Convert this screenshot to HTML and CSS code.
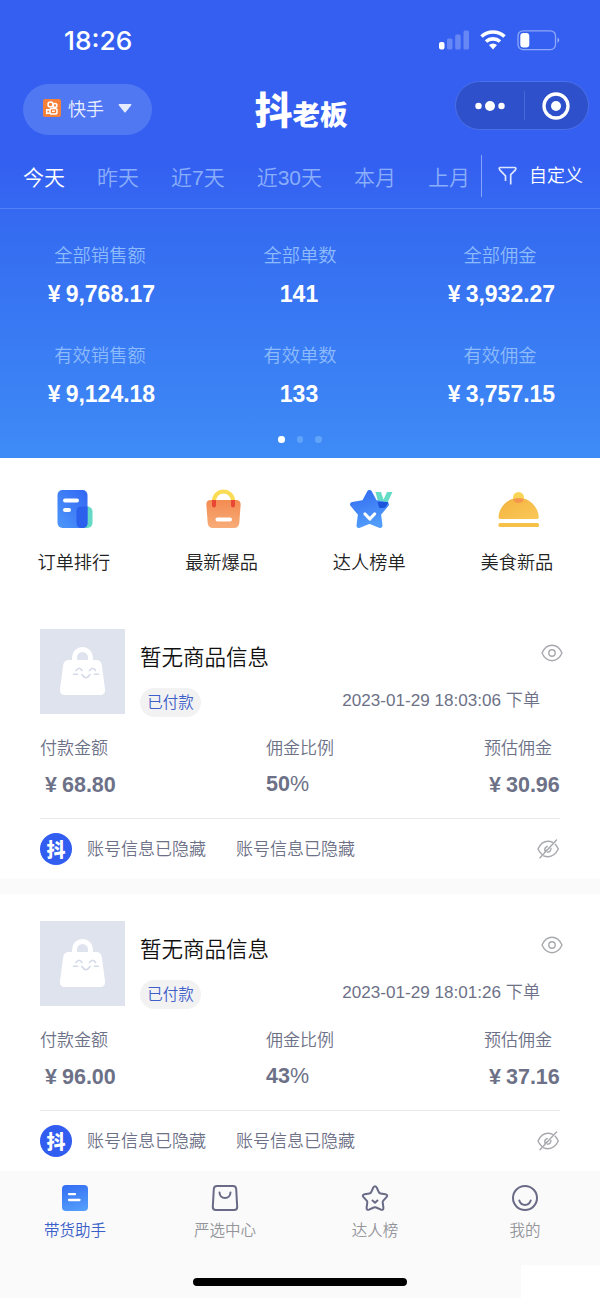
FILE: index.html
```html
<!DOCTYPE html>
<html lang="zh-CN">
<head>
<meta charset="utf-8">
<title>抖老板</title>
<link rel="stylesheet" href="styles.css">
</head>
<body>
<svg class="defs" width="0" height="0" aria-hidden="true">
  <defs>
    <linearGradient id="blue" x1="1" y1="0" x2="0" y2="1"><stop offset="0" stop-color="#3166f3"/><stop offset="1" stop-color="#4e98fb"/></linearGradient>
    <linearGradient id="blue-down" x1=".3" y1="0" x2=".6" y2="1"><stop offset="0" stop-color="#3570f3"/><stop offset="1" stop-color="#529dfb"/></linearGradient>
    <linearGradient id="orange" x1="0" y1="0" x2="0" y2="1"><stop offset="0" stop-color="#f38b52"/><stop offset="1" stop-color="#f8ac78"/></linearGradient>
    <linearGradient id="yellow" x1="0" y1="0" x2="1" y2="1"><stop offset="0" stop-color="#f3b23d"/><stop offset="1" stop-color="#fac95a"/></linearGradient>
    <symbol id="bag" viewBox="0 0 85 85">
      <path d="M34.500 34v-5.500a8 8 0 0 1 16 0V34" fill="none" stroke="#fff" stroke-width="5"/>
      <path d="M29 31h27q5 0 5.800 5l3.200 24q.5 6-5 6H25q-5.500 0-5-6l3.200-24q.8-5 5.800-5z" fill="#fff"/>
      <g fill="none" stroke="#d5dae8" stroke-width="1.600" stroke-linecap="round"><path d="M36 41.500q3.500-4.500 6 0M49.500 41.500q3.500-4.500 6 0M33.500 45.200h4M54.500 45.200h4M42 45.500q4 6.500 8 0"/></g>
    </symbol>
    <symbol id="eye" viewBox="0 0 24 20">
      <g fill="none" stroke="#a7a8ad" stroke-width="1.400"><path d="M2 10Q5.500 2.300 12 2.300T22 10Q18.500 17.700 12 17.700T2 10z"/><circle cx="12" cy="10" r="3.200"/></g>
    </symbol>
    <symbol id="eye-off" viewBox="0 0 24 20">
      <g fill="none" stroke="#a7a8ad" stroke-width="1.400" stroke-linecap="round"><path d="M5.500 15Q3.500 13.200 2 10Q5.500 2.300 12 2.300q2.500 0 4.500 1M19.200 5.300Q21 7.300 22.300 10Q18.500 17.700 12 17.700q-2.400 0-4.300-.8M9 12.200q-1-3.500 2.300-4.700M15 9.500q-.3 3.500-3.500 3.800M10 11.500l2.500-1.500M20.500 1L4 18.800"/></g>
    </symbol>
  </defs>
</svg>
<div class="phone">
  <header class="hero">
    <div class="status">
      <span class="clock">18:26</span>
      <svg class="status-icons" width="124" height="24" viewBox="0 0 124 24" fill="#fff">
        <rect x="1" y="14" width="5.500" height="7.500" rx="2"/>
        <g opacity=".25"><rect x="9" y="10.500" width="5.500" height="11" rx="1.500"/><rect x="17.200" y="6.500" width="5.500" height="15" rx="1.500"/><rect x="25.500" y="2.500" width="5.500" height="19" rx="1.500"/></g>
        <g fill="none" stroke="#fff" stroke-width="3.600"><path d="M43.500 8.500a17 17 0 0 1 23 0M48 13.500a10.500 10.500 0 0 1 14 0"/></g>
        <path d="M51 17a6 6 0 0 1 8 0l-4 4.500z"/>
        <rect x="80" y="2.800" width="37.500" height="18.800" rx="5" fill="none" stroke="#fff" stroke-opacity=".45" stroke-width="1.300"/>
        <rect x="82.300" y="5" width="9" height="14.400" rx="3"/>
        <path d="M119.500 9.500q3.500 2.500 0 5.500z" opacity=".5"/>
      </svg>
    </div>
    <div class="titlebar">
      <button class="platform">
        <svg width="18" height="18" viewBox="0 0 18 18"><rect width="18" height="18" rx="2" fill="#f4803a"/><g fill="none" stroke="#fff" stroke-width="1.500"><circle cx="7.500" cy="5.500" r="2.500"/><circle cx="12" cy="6.500" r="1.900"/><rect x="7" y="9.500" width="7" height="5.500" rx="1.800"/><path d="M7 11l-3.300-.2v3.700L7 14M9 12.300h2.800"/></g></svg>
        <span>快手</span>
        <svg class="caret" width="14" height="9" viewBox="0 0 14 9"><path d="M1.500 0h11q1.500 0 .7 1.300L7.800 8q-.8 1-1.600 0L.8 1.300Q0 0 1.500 0z" fill="#e4eaff"/></svg>
      </button>
      <h1 class="logo"><b>抖</b><span>老板</span></h1>
      <div class="capsule">
        <svg width="32" height="12" viewBox="0 0 32 12" fill="#fff"><circle cx="4.500" cy="6" r="3.200"/><circle cx="16" cy="6" r="5"/><circle cx="27.500" cy="6" r="3.200"/></svg>
        <i></i>
        <svg width="28" height="28" viewBox="0 0 28 28"><circle cx="14" cy="14" r="12" fill="none" stroke="#fff" stroke-width="3.300"/><circle cx="14" cy="14" r="5" fill="#fff"/></svg>
      </div>
    </div>
    <nav class="ranges">
      <span class="on">今天</span><span>昨天</span><span>近7天</span><span>近30天</span><span>本月</span><span>上月</span>
      <div class="custom"><svg width="20" height="20" viewBox="0 0 20 20"><path d="M7.500 15V9.800L2 4.200Q.2 1.500 2.500 1.500h14q2.300 0 .7 2.700l-4.500 4.500V18.500" fill="none" stroke="#dce5ff" stroke-width="1.700"/></svg>自定义</div>
    </nav>
    <section class="stats">
      <div><small>全部销售额</small><strong><em>¥</em>9,768.17</strong></div>
      <div><small>全部单数</small><strong>141</strong></div>
      <div><small>全部佣金</small><strong><em>¥</em>3,932.27</strong></div>
      <div><small>有效销售额</small><strong><em>¥</em>9,124.18</strong></div>
      <div><small>有效单数</small><strong>133</strong></div>
      <div><small>有效佣金</small><strong><em>¥</em>3,757.15</strong></div>
    </section>
    <div class="dots"><i class="on"></i><i></i><i></i></div>
  </header>

  <nav class="shortcuts">
    <a><svg width="44" height="44" viewBox="-2.500 0 44 44"><rect x="22" y="18.500" width="16" height="21.500" rx="5" fill="#65d9c5"/><rect x="3" y="2" width="30" height="38" rx="5" fill="url(#blue)"/><path d="M27 18.500h6V35q0 5-5 5h-1q-5 0-5-5V23.500q0-5 5-5z" fill="#2b60ed"/><path d="M10.500 12.500h12M10.500 22h4" stroke="#fff" stroke-width="4" stroke-linecap="round"/></svg>订单排行</a>
    <a><svg width="44" height="44" viewBox="-1 0 44 44"><path d="M13 18v-5a9.500 9.500 0 0 1 19 0v5" fill="none" stroke="#fadc55" stroke-width="4"/><path d="M10 12h25q5 0 4.600 5l-1.300 18q-.5 5-5.300 5H12q-4.800 0-5.300-5L5.400 17Q5 12 10 12z" fill="url(#orange)"/><path d="M11 12h4v5.500a2 2 0 0 1-4 0zM30 12h4v5.500a2 2 0 0 1-4 0z" fill="#e94733"/><path d="M16.500 31.500h12.500" stroke="#fff" stroke-width="4" stroke-linecap="round"/></svg>最新爆品</a>
    <a><svg width="48" height="44" viewBox="-2.500 0 48 44"><path d="M28 4h5.500l2.500 7.500L39.500 4H45l-7 15h-6z" fill="#66dcc6"/><path d="M22 4.500l5.400 10 11.500 2-7.900 9.300 1.500 11.700L22 33.300 11.500 37.500l1.500-11.700-7.900-9.300 11.500-2z" fill="url(#blue-down)" stroke="url(#blue-down)" stroke-width="5" stroke-linejoin="round"/><path d="M30 14h10.800l-2 4q-1 2-3 2h-4z" fill="#1d54dc"/><path d="M17.500 26l4.800 5 4.800-5" fill="none" stroke="#fff" stroke-width="3.200" stroke-linecap="round" stroke-linejoin="round"/></svg>达人榜单</a>
    <a><svg width="44" height="44" viewBox="-1.500 0 44 44"><circle cx="22" cy="9.500" r="5.500" fill="#fad456"/><path d="M2 29A20.200 20.500 0 0 1 42.300 29Q42.300 31 40.800 31H3.500Q2 31 2 29z" fill="url(#yellow)"/><path d="M16.700 11.300q5.300-2 10.600 0-.9 3.700-5.300 3.700t-5.300-3.700z" fill="#f4964d"/><rect x="2" y="35" width="40.500" height="4" rx="1.500" fill="#f6c149"/></svg>美食新品</a>
  </nav>

  <main class="orders">
    <article class="order">
      <div class="product">
        <svg class="thumb"><use href="#bag"/></svg>
        <div class="info">
          <div class="line"><h2>暂无商品信息</h2><svg class="eye"><use href="#eye"/></svg></div>
          <div class="line meta"><span class="tag">已付款</span><time>2023-01-29 18:03:06 下单</time></div>
        </div>
      </div>
      <dl><div><dt>付款金额</dt><dd class="yen">68.80</dd></div><div><dt>佣金比例</dt><dd class="rate">50<em>%</em></dd></div><div><dt>预估佣金</dt><dd class="yen">30.96</dd></div></dl>
      <footer><span class="avatar">抖</span><span>账号信息已隐藏</span><span>账号信息已隐藏</span><svg class="eye"><use href="#eye-off"/></svg></footer>
    </article>
    <article class="order">
      <div class="product">
        <svg class="thumb"><use href="#bag"/></svg>
        <div class="info">
          <div class="line"><h2>暂无商品信息</h2><svg class="eye"><use href="#eye"/></svg></div>
          <div class="line meta"><span class="tag">已付款</span><time>2023-01-29 18:01:26 下单</time></div>
        </div>
      </div>
      <dl><div><dt>付款金额</dt><dd class="yen">96.00</dd></div><div><dt>佣金比例</dt><dd class="rate">43<em>%</em></dd></div><div><dt>预估佣金</dt><dd class="yen">37.16</dd></div></dl>
      <footer><span class="avatar">抖</span><span>账号信息已隐藏</span><span>账号信息已隐藏</span><svg class="eye"><use href="#eye-off"/></svg></footer>
    </article>
  </main>

  <nav class="tabbar">
    <a class="on"><svg width="28" height="28" viewBox="0 0 28 28"><rect x="1" y="1" width="26" height="26" rx="4" fill="url(#blue-down)"/><path d="M8 10.200h6M8 16h10.500" stroke="#fff" stroke-width="2.300" stroke-linecap="round"/></svg>带货助手</a>
    <a><svg width="28" height="28" viewBox="0 0 28 28" fill="none" stroke="#696b86" stroke-width="2" stroke-linecap="round"><path d="M6 2h16q3 0 3.200 3l1 18q0 3-3 3H4.800q-3 0-3-3l1-18Q3 2 6 2z"/><path d="M8.500 8.500q.5 5.500 5.500 5.500t5.500-5.500"/></svg>严选中心</a>
    <a><svg width="28" height="28" viewBox="0 0 28 28" fill="none" stroke="#696b86" stroke-width="2" stroke-linecap="round" stroke-linejoin="round"><path d="M12.300 3.500q1.700-2.600 3.400 0l2.200 4.800q.5 1 1.700 1.200l4.800.8q3 .7 1.100 2.900l-3.200 3.500q-.8.900-.6 2l.7 4.800q.2 3-2.400 2.200l-4.800-2.200q-1.200-.5-2.400 0L8 25.700q-2.600.8-2.400-2.200l.7-4.800q.2-1.100-.6-2l-3.200-3.500q-1.900-2.200 1.100-2.900l4.800-.8q1.200-.2 1.700-1.200z"/><path d="M11.500 16.500l2.500 2.200 2.500-2.200"/></svg>达人榜</a>
    <a><svg width="28" height="28" viewBox="0 0 28 28" fill="none" stroke="#696b86" stroke-width="2" stroke-linecap="round"><circle cx="14" cy="14" r="12"/><path d="M8.300 16.500q1.500 4.500 5.700 4.500t5.700-4.500"/></svg>我的</a>
    <div class="home"></div>
    <div class="patch"></div>
  </nav>
</div>
</body>
</html>
```
FILE: styles.css
```css
* { box-sizing: border-box; }
body { margin: 0; background: #fff; font-family: "Liberation Sans", "Noto Sans CJK SC", sans-serif; font-weight: 350; }
h1, h2, dl, dd { margin: 0; font-weight: inherit; }
em, i { font-style: normal; }
svg { display: block; flex: none; }
.defs { position: absolute; }
.phone { width: 600px; height: 1298px; display: flex; flex-direction: column; overflow: hidden; }

.hero { height: 458px; flex: none; color: #fff; background: linear-gradient(#345ff1 0, #345ff1 35%, #356cf1 50%, #3e8bf6 100%); }
.status { height: 80px; padding: 0 38px 0 64px; display: flex; align-items: center; justify-content: space-between; }
.clock { font: 500 26.300px/30px Inter, sans-serif; padding-top: 1px; }
.titlebar { height: 54px; padding: 0 11px 0 23px; display: flex; align-items: center; justify-content: space-between; }
.platform { width: 129px; height: 51px; margin-top: 4px; padding: 0 20px 2px; border: 0; border-radius: 26px; background: #5178f3; color: #e9eeff; font: 350 18px/26px "Noto Sans CJK SC", sans-serif; display: flex; align-items: center; gap: 7px; }
.caret { margin-left: 7px; }
.logo { width: 94px; margin-left: -4px; display: flex; align-items: flex-end; font-family: "Noto Sans CJK SC", sans-serif; font-weight: 900; white-space: nowrap; padding-top: 1px; }
.logo b { font-size: 38px; line-height: 44px; font-weight: 900; }
.logo span { font-size: 27.500px; line-height: 34px; }
.capsule { width: 134px; height: 49px; margin-bottom: 3px; border: 1px solid #4b70e8; border-radius: 25px; background: #2e50ca; display: flex; align-items: center; justify-content: space-between; padding: 0 18px; }
.capsule i { width: 1px; height: 29px; background: #4868d6; }
.ranges { height: 75px; border-bottom: 1px solid #5380f4; padding: 21px 0 0 23px; display: flex; align-items: flex-start; gap: 32px; font-size: 21px; line-height: 45px; color: #8aaefa; white-space: nowrap; }
.ranges .on { color: #fff; }
.custom { height: 42px; margin-left: -21px; padding-left: 16px; border-left: 1px solid #87a5f8; display: flex; align-items: center; gap: 11px; font-size: 18px; color: #fff; }
.stats { height: 222px; padding-top: 33px; display: grid; grid-template-columns: repeat(3, 200px); grid-auto-rows: 100px; text-align: center; }
.stats small { display: block; font-size: 18.300px; line-height: 28px; color: #8dbbfc; }
.stats strong { display: block; font-size: 23px; line-height: 28px; margin-top: 10px; padding-left: 3px; font-weight: 700; }
.stats div:nth-child(3n+2) strong { padding: 0 2px 0 0; }
.stats em { margin-right: 5px; }
.dots { display: flex; justify-content: center; gap: 12px; padding-top: 5px; }
.dots i { width: 6.500px; height: 6.500px; border-radius: 50%; background: #60a4fa; }
.dots .on { background: #fff; }

.shortcuts { height: 150px; flex: none; padding: 30px 9px 0 0; display: grid; grid-template-columns: repeat(4, 147.700px); }
.shortcuts a { display: flex; flex-direction: column; align-items: center; font-size: 18.200px; line-height: 28px; gap: 17px; color: #222; }

.orders { flex: 1; min-height: 0; background: #fafafa; display: flex; flex-direction: column; gap: 15px; overflow: hidden; }
.order { height: 271px; flex: none; background: #fff; padding: 21px 40px 0; color: #6d7187; }
.order + .order { padding-top: 27px; height: 280px; }
.product { display: flex; gap: 15px; }
.thumb { width: 85px; height: 85px; background: #dfe3ee; }
.info { flex: 1; }
.line { display: flex; justify-content: space-between; }
.line h2 { padding-top: 13px; font-size: 21.500px; line-height: 32px; color: #111; }
.line .eye { margin: 14px -4px 0 0; }
.eye { width: 24px; height: 20px; }
.meta { align-items: center; margin-top: 14px; padding-right: 20px; }
.tag { width: 61px; height: 29px; border-radius: 15px; background: #f2f2f3; color: #3e60c8; font-size: 15.500px; line-height: 29px; text-align: center; }
.meta time { font-size: 17.100px; line-height: 26px; padding-bottom: 3px; }
.order dl { height: 102px; padding-top: 18px; border-bottom: 1px solid #e8e9ed; display: grid; grid-template-columns: 226px 1fr 76px; }
.order dt { font-size: 17px; line-height: 28px; }
.order dd { font-size: 21.500px; line-height: 28px; margin-top: 8px; font-weight: 700; white-space: nowrap; }
.yen::before { content: "¥"; margin: 0 5px; }
.order .rate { margin-top: 7px; }
.order dd em { font-weight: 400; }
.order footer { display: flex; align-items: center; height: 60px; font-size: 17px; line-height: 24px; gap: 30px; }
.order footer .eye { margin-left: auto; }
.order footer span:not(.avatar) { padding-top: 2px; }
.avatar { width: 32px; height: 32px; border-radius: 50%; background: #315df0; color: #fff; font: 900 19px/31px "Noto Sans CJK SC", sans-serif; text-align: center; margin-right: -15px; }

.tabbar { position: relative; height: 127px; flex: none; background: #fafafa; display: grid; grid-template-columns: repeat(4, 1fr); padding-top: 13px; }
.tabbar a { display: flex; flex-direction: column; align-items: center; gap: 6px; font-size: 15.500px; line-height: 26px; color: #94959b; }
.tabbar .on { color: #3b5fc9; }
.home { position: absolute; left: 193px; bottom: 12px; width: 214px; height: 8px; border-radius: 4px; background: #000; }
.patch { position: absolute; right: 0; bottom: 0; width: 79px; height: 33px; background: #fff; }
```
